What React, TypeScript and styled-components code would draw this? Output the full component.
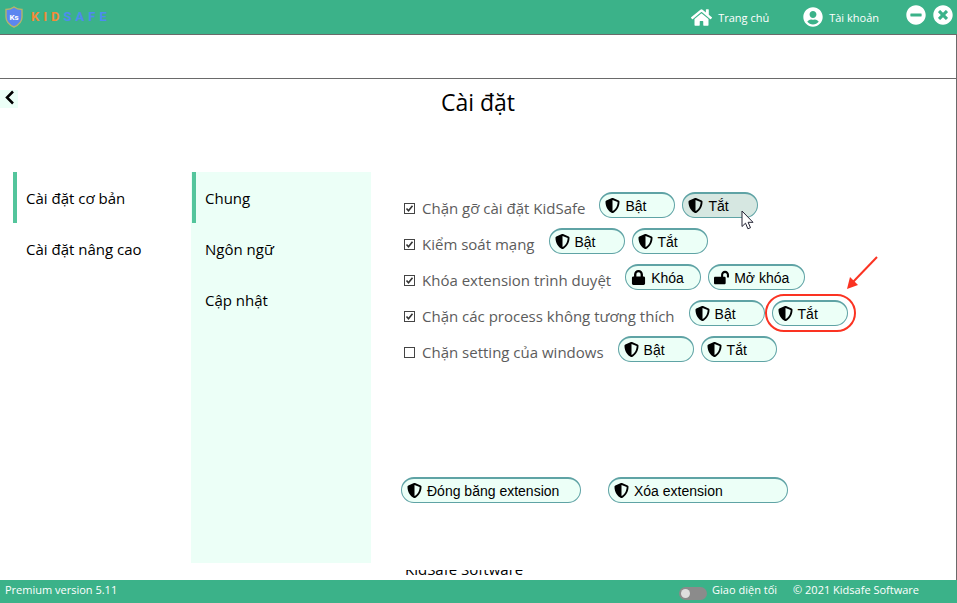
import React from "react";
import styled, { createGlobalStyle, css } from "styled-components";
import {
  FaHome,
  FaLock,
  FaLockOpen,
  FaMinusCircle,
  FaShieldAlt,
  FaTimesCircle,
  FaUserCircle,
} from "react-icons/fa";

const color = {
  brand: "#3bb289",
  accent: "#54c59c",
  mint: "#ecfff7",
  line: "#6a6a6a",
  teal: "#5fa3a5",
  label: "#5c5c5c",
  alert: "#fb3322",
};

const GlobalStyle = createGlobalStyle`
  *, *::before, *::after { box-sizing: border-box; }
  body {
    margin: 0;
    background: #fff;
    color: #000;
    font-family: "Open Sans", "Noto Sans", sans-serif;
    font-size: 15px;
  }
  button { font: inherit; color: inherit; cursor: pointer; }
`;

const Window = styled.div`
  display: flex;
  flex-direction: column;
  min-height: 100vh;
`;

const TitleBar = styled.header`
  display: flex;
  align-items: center;
  height: 34px;
  padding: 0 4px 0 5px;
  background: ${color.brand};
  color: #fff;
`;

const Brand = styled.div`
  display: flex;
  align-items: center;
  gap: 8px;
  margin-right: auto;
  font: bold 13px/20px Roboto, sans-serif;
  letter-spacing: 4px;
`;

const BrandPart = styled.span<{ $tone: string }>`
  color: ${(p) => p.$tone};
`;

const BrandName = styled.span`
  display: flex;
`;

const TopLink = styled.a`
  display: flex;
  align-items: center;
  gap: 6px;
  margin-right: 34px;
  color: #fff;
  font-size: 11px;
  font-weight: 500;
  line-height: 18px;
  text-decoration: none;
`;

const TopLinkText = styled.span`
  padding-top: 2px;
`;

const WindowControls = styled.div`
  display: flex;
  gap: 7px;
  margin-left: -7px;
  padding-bottom: 4px;
`;

const IconButton = styled.button`
  display: flex;
  padding: 0;
  border: 0;
  background: none;
`;

const Content = styled.div`
  display: flex;
  flex-direction: column;
  flex: 1;
  border: 1px solid ${color.line};
  border-width: 1px 1px 0 0;
`;

const BlankStrip = styled.div`
  height: 44px;
  border-bottom: 1px solid ${color.line};
`;

const PageHead = styled.div`
  display: grid;
  grid-template-columns: 18px 1fr 18px;
  align-items: start;
  height: 93px;
  padding-top: 8px;
`;

const BackButton = styled(IconButton)`
  width: 18px;
  height: 18px;
  margin-top: 3px;
  background: ${color.mint};
`;

const Title = styled.h1`
  margin: 0;
  font-size: 23px;
  font-weight: 400;
  line-height: 30px;
  text-align: center;
`;

const Columns = styled.main`
  display: grid;
  grid-template-columns: 178px 180px 1fr;
  flex: 1;
  padding-left: 13px;
`;

const Menu = styled.nav<{ $tinted?: boolean }>`
  margin-bottom: 17px;
  padding-left: ${(p) => (p.$tinted ? 1 : 0)}px;
  background: ${(p) => (p.$tinted ? color.mint : "transparent")};
`;

const MenuItem = styled.button<{ $active?: boolean }>`
  display: block;
  width: 100%;
  height: 51px;
  padding: 0 0 0 9px;
  border: 0;
  border-left: 4px solid ${(p) => (p.$active ? color.accent : "transparent")};
  background: none;
  line-height: 24px;
  text-align: left;
`;

const Panel = styled.section`
  display: flex;
  flex-direction: column;
  padding: 20px 0 0 30px;
`;

const OptionList = styled.div`
  display: flex;
  flex-direction: column;
  gap: 7px;
`;

const OptionRow = styled.div`
  display: flex;
  gap: 14px;
  padding-left: 3px;
`;

const OptionLabel = styled.label`
  display: flex;
  align-items: center;
  gap: 7px;
  height: 26px;
  margin-top: 3px;
  color: ${color.label};
  line-height: 24px;
  white-space: nowrap;
`;

const CheckBox = styled.span`
  display: grid;
  width: 11px;
  height: 11px;

  & > * {
    grid-area: 1 / 1;
  }

  svg {
    display: none;
    pointer-events: none;
  }

  input:checked + svg {
    display: block;
  }
`;

const CheckInput = styled.input`
  appearance: none;
  width: 11px;
  height: 11px;
  margin: 0;
  border: 1px solid #444;
  background: #fff;
`;

const Actions = styled.div`
  display: flex;
  align-items: flex-start;
  gap: 7px;
`;

const Anchor = styled.div`
  position: relative;
`;

const Pill = styled.button<{ $width?: number; $pressed?: boolean }>`
  display: flex;
  align-items: center;
  gap: 5px;
  width: ${(p) => p.$width ?? 76}px;
  height: 26px;
  padding: 0 0 0 5px;
  border: 1px solid ${color.teal};
  border-top-width: 2px;
  border-radius: 13px;
  background: ${(p) => (p.$pressed ? "#d6e7e1" : color.mint)};
  font-family: "Liberation Sans", Arial, sans-serif;
  font-size: 14px;
  line-height: 18px;
  white-space: nowrap;

  svg {
    flex: none;
  }
`;

const PillText = styled.span`
  padding-top: 1px;
`;

const overlay = css`
  position: absolute;
  pointer-events: none;
`;

const Highlight = styled.span`
  ${overlay}
  inset: -6px -8px -6px -7px;
  border: 2px solid ${color.alert};
  border-radius: 19px;
`;

const ArrowMark = styled.svg`
  ${overlay}
  left: 73px;
  top: -45px;
`;

const Pointer = styled.svg`
  ${overlay}
  left: 59px;
  top: 18px;
`;

const ExtensionActions = styled.div`
  display: flex;
  gap: 27px;
  margin-top: 112px;
`;

const ClippedNote = styled.div`
  display: flex;
  align-items: flex-end;
  height: 10px;
  margin: auto 0 0 4px;
  overflow: hidden;
  line-height: 22px;
`;

const Footer = styled.footer`
  display: flex;
  align-items: flex-start;
  height: 23px;
  padding: 1px 38px 0 5px;
  background: ${color.brand};
  color: #fff;
  font-size: 11px;
  font-weight: 500;
  line-height: 18px;
`;

const ThemeSwitch = styled.label`
  display: flex;
  gap: 5px;
  margin: 0 16px 0 auto;
`;

const SwitchInput = styled.input`
  appearance: none;
  width: 28px;
  height: 13px;
  margin: 6px 0 0;
  padding: 2px;
  border-radius: 7px;
  background: #8b8b8b;

  &::before {
    content: "";
    display: block;
    width: 9px;
    height: 9px;
    border-radius: 50%;
    background: #dedede;
  }

  &:checked::before {
    margin-left: auto;
  }
`;

const ShieldLogo = () => (
  <svg width="18" height="22" viewBox="0 0 18 22" role="img" aria-label="KidSafe">
    <path
      d="M9 1C6.500 3 4 3.500 1 3.500V11c0 5 3.500 8 8 10 4.500-2 8-5 8-10V3.500C14 3.500 11.500 3 9 1z"
      fill="#5b86f0"
      stroke="#b5b36c"
      strokeWidth="1.400"
    />
    <text
      x="9"
      y="13.500"
      textAnchor="middle"
      fill="#fff"
      fontFamily="Roboto, sans-serif"
      fontSize="8"
      fontWeight="700"
      letterSpacing="0"
    >
      Ks
    </text>
  </svg>
);

const BackIcon = () => (
  <svg width="18" height="18" viewBox="0 0 18 18" aria-hidden="true">
    <path d="M13 1.500L7 7.500l6 6" fill="none" stroke="#000" strokeWidth="2.500" />
  </svg>
);

type Action = {
  text: string;
  icon: "shield" | "lock" | "unlock";
  width?: number;
  pressed?: boolean;
  marked?: boolean;
};

const icons = {
  shield: <FaShieldAlt size={15} />,
  lock: <FaLock size={15} />,
  unlock: <FaLockOpen size={15} />,
};

const on: Action = { text: "Bật", icon: "shield" };
const off: Action = { text: "Tắt", icon: "shield" };

const options: { text: string; checked: boolean; actions: Action[] }[] = [
  { text: "Chặn gỡ cài đặt KidSafe", checked: true, actions: [on, { ...off, pressed: true }] },
  { text: "Kiểm soát mạng", checked: true, actions: [on, off] },
  {
    text: "Khóa extension trình duyệt",
    checked: true,
    actions: [
      { text: "Khóa", icon: "lock" },
      { text: "Mở khóa", icon: "unlock", width: 97 },
    ],
  },
  {
    text: "Chặn các process không tương thích",
    checked: true,
    actions: [on, { ...off, marked: true }],
  },
  { text: "Chặn setting của windows", checked: false, actions: [on, off] },
];

const ActionButton = ({ text, icon, width, pressed, marked }: Action) => (
  <Anchor>
    <Pill type="button" $width={width} $pressed={pressed}>
      {icons[icon]}
      <PillText>{text}</PillText>
    </Pill>
    {pressed && (
      <Pointer width="14" height="20" viewBox="0 0 14 20" aria-hidden="true">
        <path
          d="M1 1v15.500l3.500-3.300 2.400 5.600 2.600-1.100-2.400-5.400H12z"
          fill="#fff"
          stroke="#223"
          strokeWidth="1"
        />
      </Pointer>
    )}
    {marked && (
      <>
        <Highlight />
        <ArrowMark width="34" height="36" viewBox="0 0 34 36" aria-hidden="true">
          <path d="M32 2L8 27" stroke={color.alert} strokeWidth="2" fill="none" />
          <path d="M2 34l3-12 8 8z" fill={color.alert} />
        </ArrowMark>
      </>
    )}
  </Anchor>
);

export default function App() {
  return (
    <>
      <GlobalStyle />
      <Window>
        <TitleBar>
          <Brand>
            <ShieldLogo />
            <BrandName>
              <BrandPart $tone="#f28c38">KID</BrandPart>
              <BrandPart $tone="#4f8af0">SAFE</BrandPart>
            </BrandName>
          </Brand>
          <TopLink href="#home">
            <FaHome size={21} />
            <TopLinkText>Trang chủ</TopLinkText>
          </TopLink>
          <TopLink href="#account">
            <FaUserCircle size={20} />
            <TopLinkText>Tài khoản</TopLinkText>
          </TopLink>
          <WindowControls>
            <IconButton type="button" aria-label="Thu nhỏ">
              <FaMinusCircle size={20} />
            </IconButton>
            <IconButton type="button" aria-label="Đóng">
              <FaTimesCircle size={20} />
            </IconButton>
          </WindowControls>
        </TitleBar>

        <Content>
          <BlankStrip />
          <PageHead>
            <BackButton type="button" aria-label="Quay lại">
              <BackIcon />
            </BackButton>
            <Title>Cài đặt</Title>
          </PageHead>
          <Columns>
            <Menu>
              <MenuItem $active>Cài đặt cơ bản</MenuItem>
              <MenuItem>Cài đặt nâng cao</MenuItem>
            </Menu>
            <Menu $tinted>
              <MenuItem $active>Chung</MenuItem>
              <MenuItem>Ngôn ngữ</MenuItem>
              <MenuItem>Cập nhật</MenuItem>
            </Menu>
            <Panel>
              <OptionList>
                {options.map((option) => (
                  <OptionRow key={option.text}>
                    <OptionLabel>
                      <CheckBox>
                        <CheckInput type="checkbox" defaultChecked={option.checked} />
                        <svg width="11" height="11" viewBox="0 0 11 11" aria-hidden="true">
                          <path d="M2.500 5.500l2 2.200 4-5" fill="none" stroke="#333" strokeWidth="1.600" />
                        </svg>
                      </CheckBox>
                      {option.text}
                    </OptionLabel>
                    <Actions>
                      {option.actions.map((action) => (
                        <ActionButton key={action.text} {...action} />
                      ))}
                    </Actions>
                  </OptionRow>
                ))}
              </OptionList>
              <ExtensionActions>
                <Pill type="button" $width={180}>
                  {icons.shield}
                  <PillText>Đóng băng extension</PillText>
                </Pill>
                <Pill type="button" $width={180}>
                  {icons.shield}
                  <PillText>Xóa extension</PillText>
                </Pill>
              </ExtensionActions>
              <ClippedNote>KidSafe Software</ClippedNote>
            </Panel>
          </Columns>
        </Content>

        <Footer>
          <span>Premium version 5.11</span>
          <ThemeSwitch>
            <SwitchInput type="checkbox" role="switch" />
            Giao diện tối
          </ThemeSwitch>
          <span>© 2021 Kidsafe Software</span>
        </Footer>
      </Window>
    </>
  );
}
